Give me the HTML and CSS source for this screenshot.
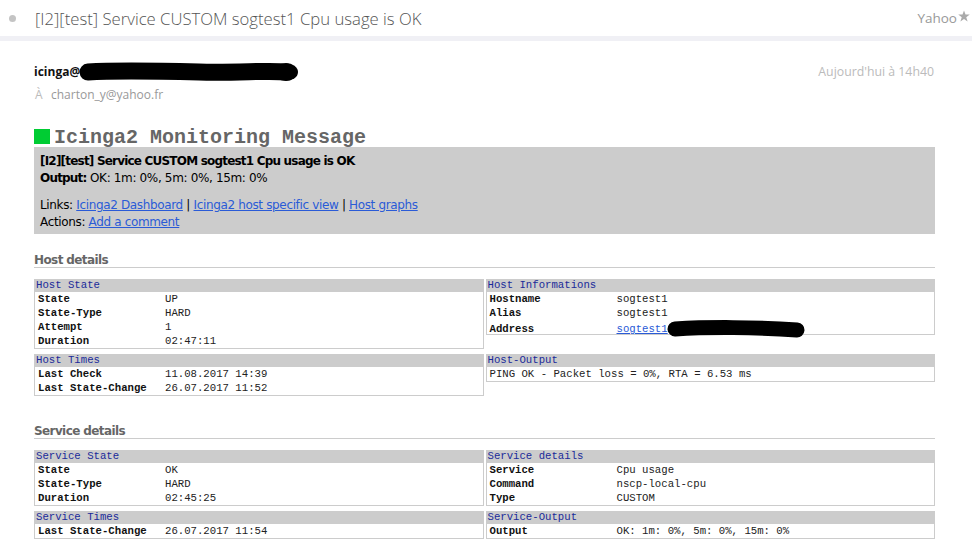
FILE: index.html
```html
<!DOCTYPE html>
<html lang="fr">
<head>
<meta charset="utf-8">
<title>[I2][test] Service CUSTOM sogtest1 Cpu usage is OK</title>
<link rel="stylesheet" href="styles.css">
</head>
<body>
<header class="topbar">
  <span class="dot"></span>
  <h1 class="subject">[I2][test] Service CUSTOM sogtest1 Cpu usage is OK</h1>
  <span class="provider">Yahoo<svg class="star" width="12" height="12" viewBox="0 0 24 24"><polygon points="12,1 15,9 23.5,9 16.5,14.5 19.2,23 12,17.8 4.8,23 7.5,14.5 0.5,9 9,9" fill="#aaa"/></svg></span>
</header>
<div class="band"></div>

<main class="mail">
  <div class="from-row">
    <div class="from"><b>icinga@</b><svg class="blob1" width="220" height="20" viewBox="0 0 220 20"><path d="M9 10 C40 8 80 9 120 10 C160 11 190 8 208 10" stroke="#000" stroke-width="17" stroke-linecap="round" fill="none"/><ellipse cx="207" cy="10" rx="12" ry="9" fill="#000"/></svg></div>
    <div class="date">Aujourd'hui à 14h40</div>
  </div>
  <div class="to"><span class="to-label">À</span>charton_y@yahoo.fr</div>

  <h2 class="title"><span class="square"></span><span class="title-text">Icinga2 Monitoring Message</span></h2>

  <div class="summary">
    <div><b>[I2][test] Service CUSTOM sogtest1 Cpu usage is OK</b></div>
    <div><b>Output:</b> OK: 1m: 0%, 5m: 0%, 15m: 0%</div>
    <div class="links">Links: <a href="#">Icinga2 Dashboard</a> | <a href="#">Icinga2 host specific view</a> | <a href="#">Host graphs</a></div>
    <div>Actions: <a href="#">Add a comment</a></div>
  </div>

  <h3 class="section">Host details</h3>
  <div class="details">
    <div class="card">
      <div class="card-h">Host State</div>
      <div class="row"><span class="k">State</span><span>UP</span></div>
      <div class="row"><span class="k">State-Type</span><span>HARD</span></div>
      <div class="row"><span class="k">Attempt</span><span>1</span></div>
      <div class="row"><span class="k">Duration</span><span>02:47:11</span></div>
    </div>
    <div class="card">
      <div class="card-h">Host Informations</div>
      <div class="row"><span class="k">Hostname</span><span>sogtest1</span></div>
      <div class="row"><span class="k">Alias</span><span>sogtest1</span></div>
      <div class="row"><span class="k">Address</span><span><a href="#">sogtest1</a><svg class="blob2" width="140" height="18" viewBox="0 0 140 18"><path d="M8 9 C40 7 90 7 130 10" stroke="#000" stroke-width="15" stroke-linecap="round" fill="none"/></svg></span></div>
    </div>
    <div class="card">
      <div class="card-h">Host Times</div>
      <div class="row"><span class="k">Last Check</span><span>11.08.2017 14:39</span></div>
      <div class="row"><span class="k">Last State-Change</span><span>26.07.2017 11:52</span></div>
    </div>
    <div class="card">
      <div class="card-h">Host-Output</div>
      <div class="row"><span>PING OK - Packet loss = 0%, RTA = 6.53 ms</span></div>
    </div>
  </div>

  <h3 class="section section-2">Service details</h3>
  <div class="details">
    <div class="card">
      <div class="card-h">Service State</div>
      <div class="row"><span class="k">State</span><span>OK</span></div>
      <div class="row"><span class="k">State-Type</span><span>HARD</span></div>
      <div class="row"><span class="k">Duration</span><span>02:45:25</span></div>
    </div>
    <div class="card">
      <div class="card-h">Service details</div>
      <div class="row"><span class="k">Service</span><span>Cpu usage</span></div>
      <div class="row"><span class="k">Command</span><span>nscp-local-cpu</span></div>
      <div class="row"><span class="k">Type</span><span>CUSTOM</span></div>
    </div>
    <div class="card">
      <div class="card-h">Service Times</div>
      <div class="row"><span class="k">Last State-Change</span><span>26.07.2017 11:54</span></div>
    </div>
    <div class="card">
      <div class="card-h">Service-Output</div>
      <div class="row"><span class="k">Output</span><span>OK: 1m: 0%, 5m: 0%, 15m: 0%</span></div>
    </div>
  </div>
</main>
</body>
</html>
```

FILE: styles.css
```css
html, body {
  margin: 0;
  padding: 0;
  background: #fff;
}
body {
  font-family: "Open Sans", "Liberation Sans", sans-serif;
  color: #333;
}
.topbar {
  height: 36px;
  display: flex;
  align-items: center;
  padding: 0 2px 0 9px;
}
.dot {
  width: 7px;
  height: 7px;
  border-radius: 50%;
  background: #c4c4c4;
  margin-right: 19px;
  flex: none;
}
.subject {
  margin: 0;
  flex: 1;
  font-size: 16.7px;
  font-weight: 300;
  color: #555;
  white-space: nowrap;
}
.provider {
  display: flex;
  align-items: center;
  font-size: 13.5px;
  color: #999;
}
.star {
  margin-left: 1px;
  margin-top: -5px;
}
.band {
  height: 5px;
  background: #f0f0f5;
}
.mail {
  padding: 0 37px 0 34px;
}
.from-row {
  margin-top: 21px;
  display: flex;
  justify-content: space-between;
  align-items: center;
  height: 18px;
}
.from {
  display: flex;
  align-items: center;
  font-size: 12px;
  color: #111;
}
.blob1 {
  margin-left: -1px;
  margin-top: 2px;
}
.date {
  font-size: 12.3px;
  color: #bbb;
  padding-right: 1px;
}
.to {
  margin-top: 6px;
  height: 18px;
  line-height: 18px;
  font-size: 12px;
  color: #999;
}
.to-label {
  color: #bbb;
  display: inline-block;
  width: 16px;
  padding-left: 1px;
}
.title {
  margin: 21px 0 0;
  height: 22px;
  line-height: 22px;
  display: flex;
  align-items: center;
  font-family: "Liberation Mono", monospace;
  font-size: 20px;
  font-weight: bold;
  color: #666;
}
.title-text {
  padding-top: 3px;
}
.square {
  width: 16px;
  height: 15px;
  background: #00cc33;
  margin-right: 4px;
  flex: none;
}
.summary {
  background: #cccccc;
  padding: 6px 6px 3px;
  font-family: "DejaVu Sans", sans-serif;
  font-size: 12px;
  letter-spacing: -0.35px;
  line-height: 17px;
  color: #000;
}
.summary b {
  letter-spacing: -0.8px;
}
.summary a, .row a {
  color: #2a5bd7;
}
.links {
  margin-top: 10px;
}
.section {
  margin: 17px 0 11px;
  padding: 0;
  height: 16px;
  line-height: 18px;
  border-bottom: 1px solid #ccc;
  font-family: "DejaVu Sans", sans-serif;
  font-size: 12px;
  letter-spacing: -0.6px;
  font-weight: bold;
  color: #666;
}
.section-2 {
  margin-top: 26px;
}
.details {
  display: grid;
  grid-template-columns: 1fr 1fr;
  column-gap: 2px;
  row-gap: 5px;
  align-items: start;
  font-family: "Liberation Mono", monospace;
  font-size: 8pt;
}
.card {
  border: 1px solid #ccc;
  border-top: 0;
}
.card-h {
  background: #ccc;
  color: #1a2a9a;
  height: 13px;
  line-height: 13px;
  padding-left: 1px;
}
.row {
  display: grid;
  grid-template-columns: 127px 1fr;
  height: 14px;
  line-height: 14px;
  padding-left: 3px;
  color: #222;
  white-space: nowrap;
}
.k {
  font-weight: bold;
  color: #111;
}
.row > span:only-child {
  grid-column: 1 / 3;
}
.row span {
  display: flex;
  align-items: center;
}
.blob2 {
  margin-left: -1px;
}
```
